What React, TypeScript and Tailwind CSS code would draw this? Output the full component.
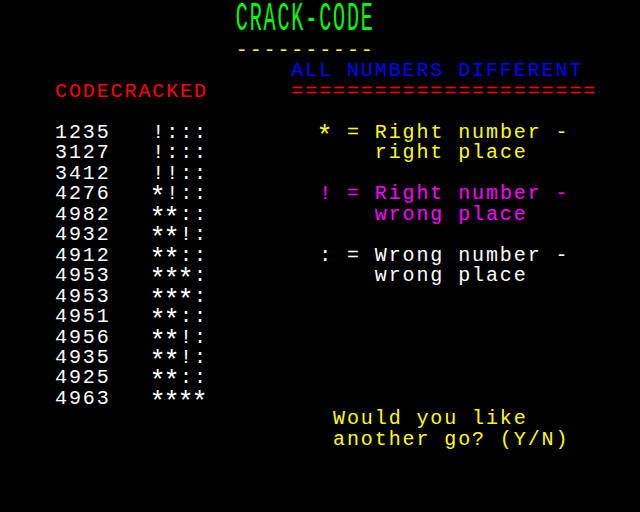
import React from 'react';

type Seg = { col: number; text: string; color: string };

const W = 'text-white';
const Y = 'text-[#ffff00]';
const M = 'text-[#ff00ff]';
const R = 'text-[#ff0000]';
const B = 'text-[#0000ff]';

const guesses: [string, string][] = [
  ['1235', '!:::'],
  ['3127', '!:::'],
  ['3412', '!!::'],
  ['4276', '*!::'],
  ['4982', '**::'],
  ['4932', '**!:'],
  ['4912', '**::'],
  ['4953', '***:'],
  ['4953', '***:'],
  ['4951', '**::'],
  ['4956', '**!:'],
  ['4935', '**!:'],
  ['4925', '**::'],
  ['4963', '****'],
];

// key text on the right, by screen row (6 = first guess row)
const keyRows: Record<number, Seg[]> = {
  6: [{ col: 19, text: '* = Right number -', color: Y }],
  7: [{ col: 23, text: 'right place', color: Y }],
  9: [{ col: 19, text: '! = Right number -', color: M }],
  10: [{ col: 23, text: 'wrong place', color: M }],
  12: [{ col: 19, text: ': = Wrong number -', color: W }],
  13: [{ col: 23, text: 'wrong place', color: W }],
};

const rows: Seg[][] = [];
rows[2] = [{ col: 13, text: '----------', color: Y }];
rows[3] = [{ col: 17, text: 'ALL NUMBERS DIFFERENT', color: B }];
rows[4] = [
  { col: 0, text: 'CODECRACKED', color: R },
  { col: 17, text: '='.repeat(22), color: R },
];
guesses.forEach(([g, c], i) => {
  const r = 6 + i;
  rows[r] = [
    { col: 0, text: g, color: W },
    { col: 7, text: c, color: W },
    ...(keyRows[r] || []),
  ];
});
rows[20] = [{ col: 20, text: 'Would you like', color: Y }];
rows[21] = [{ col: 20, text: 'another go? (Y/N)', color: Y }];

// teletext asterisk sits on the middle of the cell, not up high
function Text({ text }: { text: string }) {
  if (!text.includes('*')) return <>{text}</>;
  return (
    <>
      {text.split('').map((ch, i) =>
        ch === '*' ? (
          <span
            key={i}
            className="inline-block w-[13.9px] tracking-normal translate-y-[4px] scale-[1.35]"
          >
            *
          </span>
        ) : (
          <React.Fragment key={i}>{ch}</React.Fragment>
        )
      )}
    </>
  );
}

function Line({ segs }: { segs?: Seg[] }) {
  let pos = 0;
  return (
    <div className="h-[20.48px] leading-[20.48px] whitespace-pre">
      {(segs || []).map((s, i) => {
        const pad = ' '.repeat(Math.max(0, s.col - pos));
        pos = s.col + s.text.length;
        return (
          <React.Fragment key={i}>
            {pad}
            <span className={s.color}>
              <Text text={s.text} />
            </span>
          </React.Fragment>
        );
      })}
    </div>
  );
}

export default function App() {
  return (
    <div className="w-[640px] h-[512px] bg-black overflow-hidden pl-[55px] font-['Liberation_Mono',monospace] text-[20px] tracking-[1.9px]">
      {/* double height title across rows 0-1 */}
      <div className="h-[40.96px]">
        <div className="h-[20.48px] leading-[20.48px] whitespace-pre origin-top scale-y-200">
          {' '.repeat(13)}
          <span className="text-[#00ff00]">CRACK-CODE</span>
        </div>
      </div>
      {Array.from({ length: 23 }, (_, i) => (
        <Line key={i} segs={rows[i + 2]} />
      ))}
    </div>
  );
}
